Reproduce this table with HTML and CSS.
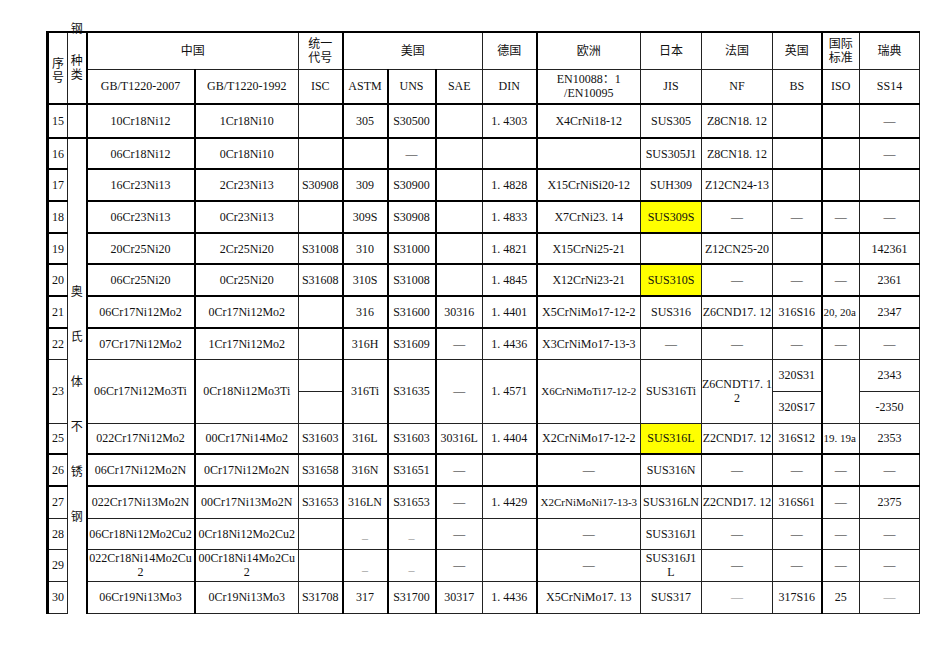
FILE: index.html
```html
<!DOCTYPE html>
<html lang="zh">
<head>
<meta charset="utf-8">
<title>不锈钢牌号对照表</title>
<link rel="stylesheet" href="styles.css">
</head>
<body>
<table class="grid">
  <colgroup>
    <col class="c-no">
    <col class="c-kind">
    <col class="c-gb tl">
    <col class="c-gb2 tl">
    <col class="c-isc">
    <col class="c-astm tl">
    <col class="c-uns tl">
    <col class="c-sae tl">
    <col class="c-din">
    <col class="c-en tl">
    <col class="c-jis">
    <col class="c-nf">
    <col class="c-bs">
    <col class="c-iso tl">
    <col class="c-ss">
  </colgroup>
  <tbody>
    <tr class="h37">
      <td rowspan="2" class="hdr-no">序<br>号</td>
      <td rowspan="2" class="hdr-kind"><div class="kind-top">钢</div><div class="kind-rest">种<br>类</div></td>
      <td colspan="2">中国</td>
      <td>统一<br>代号</td>
      <td colspan="3">美国</td>
      <td>德国</td>
      <td>欧洲</td>
      <td>日本</td>
      <td>法国</td>
      <td>英国</td>
      <td>国际<br>标准</td>
      <td>瑞典</td>
    </tr>
    <tr class="h35">
      <td>GB/T1220-2007</td>
      <td>GB/T1220-1992</td>
      <td>ISC</td>
      <td>ASTM</td>
      <td>UNS</td>
      <td>SAE</td>
      <td>DIN</td>
      <td>EN10088：1<br>/EN10095</td>
      <td>JIS</td>
      <td>NF</td>
      <td>BS</td>
      <td>ISO</td>
      <td>SS14</td>
    </tr>
    <tr class="h34 tb">
      <td class="no">15</td>
      <td></td>
      <td>10Cr18Ni12</td>
      <td>1Cr18Ni10</td>
      <td></td>
      <td>305</td>
      <td>S30500</td>
      <td></td>
      <td>1. 4303</td>
      <td>X4CrNi18-12</td>
      <td>SUS305</td>
      <td>Z8CN18. 12</td>
      <td></td>
      <td></td>
      <td>—</td>
    </tr>
    <tr class="h31 tb">
      <td class="no">16</td>
      <td rowspan="16" class="kind-col">
        <div class="kind-chars"><span>奥</span><span>氏</span><span>体</span><span>不</span><span>锈</span><span>钢</span></div>
      </td>
      <td>06Cr18Ni12</td>
      <td>0Cr18Ni10</td>
      <td></td>
      <td></td>
      <td>—</td>
      <td></td>
      <td></td>
      <td></td>
      <td>SUS305J1</td>
      <td>Z8CN18. 12</td>
      <td></td>
      <td></td>
      <td>—</td>
    </tr>
    <tr class="h32 tb">
      <td class="no">17</td>
      <td>16Cr23Ni13</td>
      <td>2Cr23Ni13</td>
      <td>S30908</td>
      <td>309</td>
      <td>S30900</td>
      <td></td>
      <td>1. 4828</td>
      <td>X15CrNiSi20-12</td>
      <td>SUH309</td>
      <td>Z12CN24-13</td>
      <td></td>
      <td></td>
      <td></td>
    </tr>
    <tr class="h32 tb">
      <td class="no">18</td>
      <td>06Cr23Ni13</td>
      <td>0Cr23Ni13</td>
      <td></td>
      <td>309S</td>
      <td>S30908</td>
      <td></td>
      <td>1. 4833</td>
      <td>X7CrNi23. 14</td>
      <td class="hl">SUS309S</td>
      <td>—</td>
      <td>—</td>
      <td>—</td>
      <td>—</td>
    </tr>
    <tr class="h31 tb">
      <td class="no">19</td>
      <td>20Cr25Ni20</td>
      <td>2Cr25Ni20</td>
      <td>S31008</td>
      <td>310</td>
      <td>S31000</td>
      <td></td>
      <td>1. 4821</td>
      <td>X15CrNi25-21</td>
      <td></td>
      <td>Z12CN25-20</td>
      <td></td>
      <td></td>
      <td>142361</td>
    </tr>
    <tr class="h32 tb">
      <td class="no">20</td>
      <td>06Cr25Ni20</td>
      <td>0Cr25Ni20</td>
      <td>S31608</td>
      <td>310S</td>
      <td>S31008</td>
      <td></td>
      <td>1. 4845</td>
      <td>X12CrNi23-21</td>
      <td class="hl">SUS310S</td>
      <td>—</td>
      <td>—</td>
      <td>—</td>
      <td>2361</td>
    </tr>
    <tr class="h32 tb">
      <td class="no">21</td>
      <td>06Cr17Ni12Mo2</td>
      <td>0Cr17Ni12Mo2</td>
      <td></td>
      <td>316</td>
      <td>S31600</td>
      <td>30316</td>
      <td>1. 4401</td>
      <td>X5CrNiMo17-12-2</td>
      <td>SUS316</td>
      <td>Z6CND17. 12</td>
      <td>316S16</td>
      <td class="tiny">20, 20a</td>
      <td>2347</td>
    </tr>
    <tr class="h31 tb">
      <td class="no">22</td>
      <td>07Cr17Ni12Mo2</td>
      <td>1Cr17Ni12Mo2</td>
      <td></td>
      <td>316H</td>
      <td>S31609</td>
      <td>—</td>
      <td>1. 4436</td>
      <td>X3CrNiMo17-13-3</td>
      <td>—</td>
      <td>—</td>
      <td>—</td>
      <td>—</td>
      <td>—</td>
    </tr>
    <tr class="h32 tg">
      <td class="no" rowspan="2">23</td>
      <td rowspan="2">06Cr17Ni12Mo3Ti</td>
      <td rowspan="2">0Cr18Ni12Mo3Ti</td>
      <td></td>
      <td rowspan="2">316Ti</td>
      <td rowspan="2">S31635</td>
      <td rowspan="2">—</td>
      <td rowspan="2">1. 4571</td>
      <td rowspan="2" class="narrow">X6CrNiMoTi17-12-2</td>
      <td rowspan="2">SUS316Ti</td>
      <td rowspan="2">Z6CNDT17. 1<br>2</td>
      <td>320S31</td>
      <td rowspan="2"></td>
      <td>2343</td>
    </tr>
    <tr class="h32">
      <td class="split"></td>
      <td class="split">320S17</td>
      <td class="split">-2350</td>
    </tr>
    <tr class="h31 tg">
      <td class="no">25</td>
      <td>022Cr17Ni12Mo2</td>
      <td>00Cr17Ni14Mo2</td>
      <td>S31603</td>
      <td>316L</td>
      <td>S31603</td>
      <td>30316L</td>
      <td>1. 4404</td>
      <td>X2CrNiMo17-12-2</td>
      <td class="hl">SUS316L</td>
      <td>Z2CND17. 12</td>
      <td>316S12</td>
      <td class="tiny">19. 19a</td>
      <td>2353</td>
    </tr>
    <tr class="h32 tb">
      <td class="no">26</td>
      <td>06Cr17Ni12Mo2N</td>
      <td>0Cr17Ni12Mo2N</td>
      <td>S31658</td>
      <td>316N</td>
      <td>S31651</td>
      <td>—</td>
      <td></td>
      <td>—</td>
      <td>SUS316N</td>
      <td>—</td>
      <td>—</td>
      <td>—</td>
      <td>—</td>
    </tr>
    <tr class="h32 tb">
      <td class="no">27</td>
      <td>022Cr17Ni13Mo2N</td>
      <td>00Cr17Ni13Mo2N</td>
      <td>S31653</td>
      <td>316LN</td>
      <td>S31653</td>
      <td>—</td>
      <td>1. 4429</td>
      <td class="narrow">X2CrNiMoNi17-13-3</td>
      <td>SUS316LN</td>
      <td>Z2CND17. 12</td>
      <td>316S61</td>
      <td>—</td>
      <td>2375</td>
    </tr>
    <tr class="h31 tg">
      <td class="no">28</td>
      <td>06Cr18Ni12Mo2Cu2</td>
      <td>0Cr18Ni12Mo2Cu2</td>
      <td></td>
      <td class="low">_</td>
      <td class="low">_</td>
      <td>—</td>
      <td></td>
      <td>—</td>
      <td>SUS316J1</td>
      <td>—</td>
      <td>—</td>
      <td>—</td>
      <td>—</td>
    </tr>
    <tr class="h32 tg">
      <td class="no">29</td>
      <td>022Cr18Ni14Mo2Cu<br>2</td>
      <td>00Cr18Ni14Mo2Cu<br>2</td>
      <td></td>
      <td class="low">_</td>
      <td class="low">_</td>
      <td>—</td>
      <td></td>
      <td>—</td>
      <td>SUS316J1<br>L</td>
      <td>—</td>
      <td>—</td>
      <td>—</td>
      <td>—</td>
    </tr>
    <tr class="h32 tg">
      <td class="no">30</td>
      <td>06Cr19Ni13Mo3</td>
      <td>0Cr19Ni13Mo3</td>
      <td>S31708</td>
      <td>317</td>
      <td>S31700</td>
      <td>30317</td>
      <td>1. 4436</td>
      <td>X5CrNiMo17. 13</td>
      <td>SUS317</td>
      <td class="soft">—</td>
      <td>317S16</td>
      <td>25</td>
      <td class="soft">—</td>
    </tr>
  </tbody>
</table>
</body>
</html>
```

FILE: styles.css
```css
html, body {
  margin: 0;
  padding: 0;
  background: #ffffff;
}

body {
  font-family: "Liberation Serif", "Noto Sans CJK SC", serif;
  font-size: 12px;
  line-height: 14px;
  color: #111;
}

.grid {
  margin: 31px 0 0 46px;
  width: 872px;
  table-layout: fixed;
  border-collapse: collapse;
  border-top: 2px solid #000;
  border-left: 3px solid #000;
  border-right: 1px solid #666;
  border-bottom: 1px solid #666;
  font-family: "Liberation Serif", "Noto Sans CJK SC", serif;
}

.c-no { width: 20px; }
.c-kind { width: 19px; }
.c-gb { width: 108px; }
.c-gb2 { width: 104px; }
.c-isc { width: 44px; }
.c-astm { width: 45px; }
.c-uns { width: 48px; }
.c-sae { width: 47px; }
.c-din { width: 54px; }
.c-en { width: 104px; }
.c-jis { width: 61px; }
.c-nf { width: 71px; }
.c-bs { width: 49px; }
.c-iso { width: 38px; }
.c-ss { width: 60px; }

col.tl {
  border-left: 2px solid #000;
}

.grid td {
  border: 1px solid #222;
  padding: 0;
  text-align: center;
  vertical-align: middle;
  white-space: nowrap;
}

.grid tr.tb > td {
  border-top: 2px solid #000;
}

.grid tr.tg > td {
  border-top: 1px solid #777;
}

.h37 { height: 37px; }
.h35 { height: 35px; }
.h34 { height: 34px; }
.h32 { height: 32px; }
.h31 { height: 31px; }

.grid td.hdr-no {
  padding-top: 6px;
}

.grid td.hdr-kind {
  vertical-align: top;
}

.kind-top {
  margin-top: -11px;
}

.kind-rest {
  margin-top: 18px;
}

.grid td.kind-col {
  vertical-align: top;
  border-bottom-style: hidden;
}

.kind-chars {
  display: flex;
  flex-direction: column;
  align-items: center;
  gap: 31px;
  padding-top: 146px;
}

.grid td.no {
  text-align: left;
  padding-left: 3px;
}

.hl {
  background: #ffff00;
}

.narrow {
  font-size: 11px;
}

.grid td.tiny {
  font-size: 11px;
  text-align: left;
  padding-left: 1px;
}

.grid td.low {
  color: #999;
  vertical-align: bottom;
  padding-bottom: 8px;
}

.soft {
  color: #888;
}

.grid td.split {
  border-top: 1px solid #555;
}
```
